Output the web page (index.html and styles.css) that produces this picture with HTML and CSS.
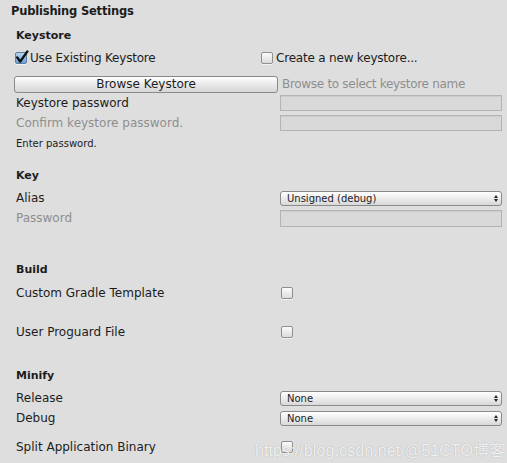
FILE: index.html
```html
<!DOCTYPE html>
<html lang="en">
<head>
  <meta charset="UTF-8">
  <title>Publishing Settings</title>
  <link rel="stylesheet" href="styles.css">
</head>
<body>
  <div class="panel">
    <div class="title">Publishing Settings</div>

    <div class="heading gap-keystore">Keystore</div>
    <div class="check-row">
      <label class="check-pair first">
        <span class="box checked">
          <svg viewBox="0 0 14 14" width="14" height="14"><path d="M2.2 7.4 L5.2 11.6 L12.4 1.4" fill="none" stroke="#111" stroke-width="2.4" stroke-linecap="round" stroke-linejoin="round"/></svg>
        </span>
        <span>Use Existing Keystore</span>
      </label>
      <label class="check-pair">
        <span class="box"></span>
        <span>Create a new keystore...</span>
      </label>
    </div>

    <div class="browse-row">
      <button class="btn">Browse Keystore</button>
      <span class="hint">Browse to select keystore name</span>
    </div>

    <div class="row">
      <span class="label">Keystore password</span>
      <span class="field input"></span>
    </div>
    <div class="row">
      <span class="label muted">Confirm keystore password.</span>
      <span class="field input"></span>
    </div>
    <div class="note">Enter password.</div>

    <div class="heading gap-key">Key</div>
    <div class="row gap-small">
      <span class="label">Alias</span>
      <span class="field select">Unsigned (debug)<i class="arrows"></i></span>
    </div>
    <div class="row">
      <span class="label muted">Password</span>
      <span class="field input tall"></span>
    </div>

    <div class="heading gap-build">Build</div>
    <div class="row gap-tiny">
      <span class="label">Custom Gradle Template</span>
      <span class="field"><span class="box"></span></span>
    </div>
    <div class="row gap-proguard">
      <span class="label">User Proguard File</span>
      <span class="field"><span class="box"></span></span>
    </div>

    <div class="heading gap-minify">Minify</div>
    <div class="row gap-small">
      <span class="label">Release</span>
      <span class="field select">None<i class="arrows"></i></span>
    </div>
    <div class="row">
      <span class="label">Debug</span>
      <span class="field select">None<i class="arrows"></i></span>
    </div>
    <div class="row gap-split">
      <span class="label">Split Application Binary</span>
      <span class="field"><span class="box"></span></span>
    </div>
  </div>

  <div class="watermark">https://blog.csdn.net/@51CTO博客</div>
</body>
</html>
```

FILE: styles.css
```css
body {
  margin: 0;
  background-color: #dedede;
  color: #1c1c1c;
  font-family: "DejaVu Sans", Verdana, sans-serif;
  font-size: 11px;
}
.panel {
  padding: 1px 5px 0 16px;
}
.title {
  height: 20px;
  line-height: 20px;
  margin-left: -5px;
  font-weight: bold;
  font-size: 11.5px;
  letter-spacing: -0.2px;
}
.heading {
  height: 20px;
  line-height: 20px;
  font-weight: bold;
}
.gap-keystore { margin-top: 5px; }
.gap-key { margin-top: 12px; }
.gap-build { margin-top: 32px; }
.gap-minify { margin-top: 24px; }
.gap-small { margin-top: 2px; }
.gap-tiny { margin-top: 3px; }
.gap-proguard { margin-top: 19px; }
.gap-split { margin-top: 9px; }

.check-row {
  display: flex;
  align-items: center;
  height: 20px;
  margin-top: 2px;
  margin-left: -1px;
}
.check-pair {
  display: flex;
  align-items: center;
  gap: 3px;
  font-size: 12px;
  letter-spacing: -0.2px;
}
.check-pair.first {
  width: 246px;
}
.box {
  display: inline-block;
  box-sizing: border-box;
  width: 12px;
  height: 12px;
  border: 1px solid #8f8f8f;
  border-radius: 2px;
  background: linear-gradient(#fbfbfb, #dcdcdc);
  box-shadow: 0 1px 0 rgba(255,255,255,0.6);
  position: relative;
}
.box.checked {
  border-color: #5a7fa8;
  background: linear-gradient(#b8d4f0, #6f9fd4);
}
.box svg {
  position: absolute;
  left: -1px;
  top: -3px;
}

.browse-row {
  display: flex;
  align-items: center;
  height: 18px;
  margin-top: 7px;
  margin-left: -2px;
}
.btn {
  box-sizing: border-box;
  width: 264px;
  height: 17px;
  padding: 0;
  border: 1px solid #8a8a8a;
  border-radius: 3px;
  background: linear-gradient(#ffffff, #e9e9e9 50%, #d6d6d6);
  color: #1c1c1c;
  font-family: inherit;
  font-size: 12px;
  line-height: 15px;
}
.hint {
  margin-left: 4px;
  color: #8e8e8e;
  font-size: 12px;
  letter-spacing: -0.3px;
}

.row {
  display: grid;
  grid-template-columns: 264px 1fr;
  align-items: center;
  height: 20px;
}
.label {
  font-size: 12px;
}
.muted {
  color: #8e8e8e;
}
.field {
  display: flex;
  align-items: center;
  box-sizing: border-box;
}
.field .box {
  margin-left: 1px;
}
.input {
  height: 16px;
  border: 1px solid #b4b4b4;
  background-color: #d9d9d9;
  box-shadow: inset 0 1px 1px rgba(0,0,0,0.06);
}
.input.tall {
  height: 17px;
}
.select {
  position: relative;
  height: 15px;
  padding-left: 6px;
  border: 1px solid #8a8a8a;
  border-radius: 3px;
  background: linear-gradient(#ffffff, #ececec 50%, #d8d8d8);
  font-size: 10px;
  color: #1c1c1c;
}
.arrows {
  position: absolute;
  right: 5px;
  top: 3px;
  width: 0;
  height: 7px;
}
.arrows::before,
.arrows::after {
  content: "";
  position: absolute;
  left: -2px;
  border-left: 2px solid transparent;
  border-right: 2px solid transparent;
}
.arrows::before {
  top: 0;
  border-bottom: 3px solid #222;
}
.arrows::after {
  top: 4px;
  border-top: 3px solid #222;
}

.note {
  height: 20px;
  line-height: 20px;
  margin-top: 1px;
  font-size: 10px;
}

.watermark {
  position: absolute;
  left: 255px;
  top: 437px;
  white-space: nowrap;
  color: rgba(255,255,255,0.85);
  text-shadow: 0 0 1px rgba(0,0,0,0.3);
  font-family: "Liberation Sans", "Noto Sans CJK SC", sans-serif;
  font-size: 16px;
  letter-spacing: 0.1px;
}
```
